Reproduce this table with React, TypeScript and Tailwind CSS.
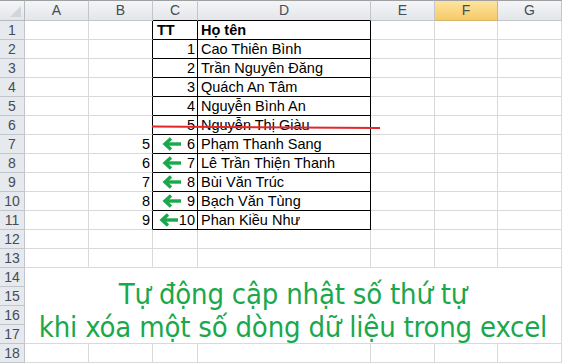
const COLS = ['A', 'B', 'C', 'D', 'E', 'F', 'G']

type Row = { b?: string; c?: string; d?: string; arrow?: boolean; head?: boolean }

const ROWS: Row[] = [
  { c: 'TT', d: 'Họ tên', head: true },
  { c: '1', d: 'Cao Thiên Bình' },
  { c: '2', d: 'Trần Nguyên Đăng' },
  { c: '3', d: 'Quách An Tâm' },
  { c: '4', d: 'Nguyễn Bình An' },
  { c: '5', d: 'Nguyễn Thị Giàu' },
  { b: '5', c: '6', d: 'Phạm Thanh Sang', arrow: true },
  { b: '6', c: '7', d: 'Lê Trần Thiện Thanh', arrow: true },
  { b: '7', c: '8', d: 'Bùi Văn Trúc', arrow: true },
  { b: '8', c: '9', d: 'Bạch Văn Tùng', arrow: true },
  { b: '9', c: '10', d: 'Phan Kiều Như', arrow: true },
]

function Arrow() {
  return (
    <svg width="19" height="14" viewBox="0 0 19 14" className="shrink-0">
      <path d="M19 7H4" stroke="#19a84b" strokeWidth="3.4" fill="none" />
      <path d="M9 1.5L3 7L9 12.5" stroke="#19a84b" strokeWidth="3.4" fill="none" strokeLinejoin="miter" />
    </svg>
  )
}

const grid = 'border-[#d9d9d9]'

export default function App() {
  return (
    <div className="relative w-[562px] h-[364px] overflow-hidden bg-white font-['Liberation_Sans',sans-serif] text-[14.5px] text-black">
      <div className="grid grid-cols-[25px_64px_64px_45px_173px_64px_63px_64px] grid-rows-[21px_repeat(18,19px)]">
        {/* header row */}
        <div className="relative border-t border-t-[#a0a0a0] border-r border-b border-[#b5b9c0] bg-gradient-to-b from-[#f4f5f7] to-[#e3e6ea]">
          <div className="absolute right-[3px] bottom-[3px] w-0 h-0 border-l-[11px] border-l-transparent border-b-[11px] border-b-[#d2d6db]" />
        </div>
        {COLS.map(c => (
          <div
            key={c}
            className={
              'flex items-center justify-center border-t border-t-[#a0a0a0] border-r border-b text-[14px] text-[#474c55] ' +
              (c === 'F'
                ? 'bg-gradient-to-b from-[#fde59f] to-[#f6c968] border-[#d7b46a]'
                : 'bg-gradient-to-b from-[#f4f5f7] to-[#e3e6ea] border-[#c2c6cc]') +
              (c === 'C' || c === 'D' ? ' border-b-black' : '')
            }
          >
            {c}
          </div>
        ))}

        {Array.from({ length: 18 }, (_, i) => {
          const n = i + 1
          const r = ROWS[i]
          const rowHead = (
            <div
              key={'h' + n}
              className="flex items-center justify-center border-r border-b border-[#c2c6cc] bg-[#e6e9ed] text-[14px] text-[#474c55]"
            >
              {n}
            </div>
          )
          if (n >= 14 && n <= 17) {
            if (n > 14) return rowHead
            return [
              rowHead,
              <div
                key="merged"
                className={`col-span-7 row-span-4 flex flex-col items-center justify-center border-r border-b ${grid} font-['DejaVu_Sans_Condensed','DejaVu_Sans',sans-serif] text-[29px] leading-[33px] text-[#1aa84c] tracking-[-0.2px] pt-[11px]`}
              >
                <div>Tự động cập nhật số thứ tự</div>
                <div>khi xóa một số dòng dữ liệu trong excel</div>
              </div>,
            ]
          }
          const inTable = !!r
          return [
            rowHead,
            <div key={'a' + n} className={`border-r border-b ${grid}`} />,
            <div
              key={'b' + n}
              className={`flex items-end justify-end pr-[2px] leading-[18px] border-r border-b ${grid} ${inTable ? 'border-r-black' : ''}`}
            >
              {r?.b}
            </div>,
            <div
              key={'c' + n}
              className={`flex items-end leading-[18px] pr-[2px] border-b ${inTable ? 'border-r border-black' : `border-r ${grid}`} ${r?.head ? 'justify-start pl-[4px] font-bold' : 'justify-end'}`}
            >
              {r?.arrow && (
                <span className={`mr-auto mb-[2px] ${r.c === '10' ? 'ml-[6px]' : 'ml-[9px]'}`}>
                  <Arrow />
                </span>
              )}
              {r?.c}
            </div>,
            <div
              key={'d' + n}
              className={`flex items-end leading-[18px] pl-[3px] border-b ${inTable ? 'border-r border-black' : `border-r ${grid}`} ${r?.head ? 'font-bold' : ''}`}
            >
              {r?.d}
            </div>,
            <div key={'e' + n} className={`border-r border-b ${grid}`} />,
            <div key={'f' + n} className={`border-r border-b ${grid}`} />,
            <div key={'g' + n} className={`border-r border-b ${grid}`} />,
          ]
        })}
      </div>

      {/* red strike line over row 6 */}
      <svg className="absolute left-0 top-0 pointer-events-none" width="562" height="364">
        <line x1="152" y1="126.5" x2="380" y2="128" stroke="#e3262a" strokeWidth="2" />
      </svg>
    </div>
  )
}
